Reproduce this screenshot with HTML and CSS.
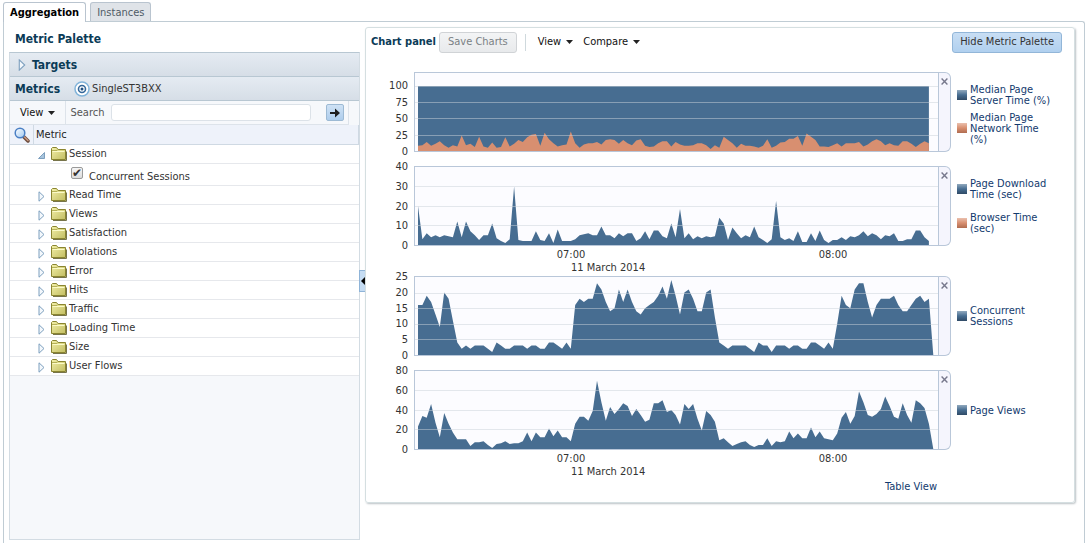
FILE: index.html
```html
<!DOCTYPE html>
<html lang="en">
<head>
  <meta charset="UTF-8">
  <meta name="viewport" content="width=device-width, initial-scale=1.0">
  <title>Metrics - Aggregation</title>
  <link rel="stylesheet" href="styles.css">
</head>
<body>
  <!-- shared icons -->
  <svg class="sprite" aria-hidden="true">
    <defs>
      <linearGradient id="folder-fill" x1="0" y1="0" x2="1" y2="1">
        <stop offset="0" stop-color="#f3f0a8"/>
        <stop offset="1" stop-color="#c2bd62"/>
      </linearGradient>
      <linearGradient id="lens-fill" x1="0" y1="0" x2="1" y2="1">
        <stop offset="0" stop-color="#ffffff"/>
        <stop offset="1" stop-color="#9fc8f0"/>
      </linearGradient>
    </defs>
    <symbol id="icon-folder" viewBox="0 0 16 14">
      <path d="M2 13.500h13.500V4.500" fill="none" stroke="#77744a"/>
      <path d="M.5 12.500V1.500L1.500 .5h4L7 2.500h7.500v10z" fill="url(#folder-fill)" stroke="#8a8530"/>
      <path d="M1 3.500h5L7 2.500" fill="none" stroke="#b5b056"/>
      <path d="M1.500 4.500h12" fill="none" stroke="#fbfac8"/>
    </symbol>
    <symbol id="icon-closed" viewBox="0 0 7 11">
      <path d="M1 .8L6 5.500L1 10.200z" fill="#f4f8fc" stroke="#7d9fbe"/>
    </symbol>
    <symbol id="icon-open" viewBox="0 0 7 7">
      <path d="M6.500 .5v6h-6z" fill="#a8c4dc" stroke="#7d9fbe"/>
    </symbol>
    <symbol id="icon-down" viewBox="0 0 7 4">
      <path d="M0 0h7L3.500 4z" fill="#222"/>
    </symbol>
    <symbol id="icon-close" viewBox="0 0 6 6">
      <path d="M.5 .5l5 5M5.500 .5l-5 5" stroke="#77788c" stroke-width="1.200"/>
    </symbol>
  </svg>

  <nav class="tabs">
    <a class="tab active" href="#aggregation">Aggregation</a>
    <a class="tab" href="#instances">Instances</a>
  </nav>

  <main class="page" id="aggregation">
    <aside class="palette">
      <h1 class="palette-title">Metric Palette</h1>

      <div class="palette-body">
        <button class="bar targets" type="button" aria-expanded="false">
          <svg width="8" height="12"><use href="#icon-closed"/></svg>
          Targets
        </button>
        <div class="bar metrics">
          <h2>Metrics</h2>
          <svg class="target-icon" viewBox="0 0 16 16" width="16" height="16">
            <circle cx="8" cy="8" r="7" fill="#fff" stroke="#82b4da" stroke-width="1.500"/>
            <circle cx="8" cy="8" r="3.500" fill="#fff" stroke="#35689a" stroke-width="1.600"/>
            <circle cx="8" cy="8" r="1.500" fill="#204f80"/>
          </svg>
          <span>SingleST3BXX</span>
        </div>

        <form class="search">
          <button class="menu" type="button">View <svg width="7" height="4"><use href="#icon-down"/></svg></button>
          <label for="search">Search</label>
          <input id="search" type="text">
          <button class="go" type="submit" aria-label="Go">
            <svg viewBox="0 0 10 10" width="10" height="10"><path d="M0 4h5V.5L10 5L5 9.500V6H0z" fill="#1d1d1d"/></svg>
          </button>
        </form>

        <table class="tree">
          <thead>
            <tr>
              <th class="find">
                <svg viewBox="0 0 16 16" width="16" height="16">
                  <path d="M9.500 9.500l4.500 4.500" stroke="#6b4a3c" stroke-width="3.500" stroke-linecap="round"/>
                  <path d="M10.500 10l3.500 3.500" stroke="#c89a82" stroke-width="1.500" stroke-linecap="round"/>
                  <circle cx="6" cy="6" r="4.800" fill="url(#lens-fill)" stroke="#4a7fc4" stroke-width="1.500"/>
                </svg>
              </th>
              <th>Metric</th>
            </tr>
          </thead>
          <tbody>
            <tr><td colspan="2"><div class="node"><svg class="twist" width="7" height="7"><use href="#icon-open"/></svg><svg width="16" height="14"><use href="#icon-folder"/></svg>Session</div></td></tr>
            <tr><td colspan="2"><div class="leaf"><input id="concurrent" type="checkbox" checked><label for="concurrent">Concurrent Sessions</label></div></td></tr>
            <tr><td colspan="2"><div class="node"><svg class="twist" width="7" height="11"><use href="#icon-closed"/></svg><svg width="16" height="14"><use href="#icon-folder"/></svg>Read Time</div></td></tr>
            <tr><td colspan="2"><div class="node"><svg class="twist" width="7" height="11"><use href="#icon-closed"/></svg><svg width="16" height="14"><use href="#icon-folder"/></svg>Views</div></td></tr>
            <tr><td colspan="2"><div class="node"><svg class="twist" width="7" height="11"><use href="#icon-closed"/></svg><svg width="16" height="14"><use href="#icon-folder"/></svg>Satisfaction</div></td></tr>
            <tr><td colspan="2"><div class="node"><svg class="twist" width="7" height="11"><use href="#icon-closed"/></svg><svg width="16" height="14"><use href="#icon-folder"/></svg>Violations</div></td></tr>
            <tr><td colspan="2"><div class="node"><svg class="twist" width="7" height="11"><use href="#icon-closed"/></svg><svg width="16" height="14"><use href="#icon-folder"/></svg>Error</div></td></tr>
            <tr><td colspan="2"><div class="node"><svg class="twist" width="7" height="11"><use href="#icon-closed"/></svg><svg width="16" height="14"><use href="#icon-folder"/></svg>Hits</div></td></tr>
            <tr><td colspan="2"><div class="node"><svg class="twist" width="7" height="11"><use href="#icon-closed"/></svg><svg width="16" height="14"><use href="#icon-folder"/></svg>Traffic</div></td></tr>
            <tr><td colspan="2"><div class="node"><svg class="twist" width="7" height="11"><use href="#icon-closed"/></svg><svg width="16" height="14"><use href="#icon-folder"/></svg>Loading Time</div></td></tr>
            <tr><td colspan="2"><div class="node"><svg class="twist" width="7" height="11"><use href="#icon-closed"/></svg><svg width="16" height="14"><use href="#icon-folder"/></svg>Size</div></td></tr>
            <tr><td colspan="2"><div class="node"><svg class="twist" width="7" height="11"><use href="#icon-closed"/></svg><svg width="16" height="14"><use href="#icon-folder"/></svg>User Flows</div></td></tr>
          </tbody>
        </table>
      </div>
    </aside>

    <div class="splitter">
      <button type="button" aria-label="Collapse palette">
        <svg viewBox="0 0 4 8" width="4" height="8"><path d="M4 0v8L0 4z" fill="#000"/></svg>
      </button>
    </div>

    <section class="charts">
      <div class="toolbar">
        <h2>Chart panel</h2>
        <button class="button" type="button" disabled>Save Charts</button>
        <span class="divider"></span>
        <button class="menu" type="button">View <svg width="7" height="4"><use href="#icon-down"/></svg></button>
        <button class="menu" type="button">Compare <svg width="7" height="4"><use href="#icon-down"/></svg></button>
        <button class="button primary" type="button">Hide Metric Palette</button>
      </div>

      <div class="chart">
        <div class="y-axis short"><span>100</span><span>75</span><span>50</span><span>25</span><span>0</span></div>
        <div class="plot"><svg data-chart="pageTime" viewBox="0 0 523 78" preserveAspectRatio="none"></svg></div>
        <button class="close" type="button" aria-label="Close"><svg width="7" height="7"><use href="#icon-close"/></svg></button>
        <ul class="legend">
          <li><i class="swatch blue"></i><span>Median Page Server Time (%)</span></li>
          <li><i class="swatch orange"></i><span>Median Page Network Time (%)</span></li>
        </ul>
      </div>

      <div class="chart">
        <div class="y-axis"><span>40</span><span>30</span><span>20</span><span>10</span><span>0</span></div>
        <div class="plot"><svg data-chart="download" viewBox="0 0 523 78" preserveAspectRatio="none"></svg></div>
        <button class="close" type="button" aria-label="Close"><svg width="7" height="7"><use href="#icon-close"/></svg></button>
        <ul class="legend spread">
          <li><i class="swatch blue"></i><span>Page Download Time (sec)</span></li>
          <li><i class="swatch orange"></i><span>Browser Time (sec)</span></li>
        </ul>
        <div class="x-axis"><span class="first">07:00</span><span class="second">08:00</span><span class="date">11 March 2014</span></div>
      </div>

      <div class="chart">
        <div class="y-axis"><span>25</span><span>20</span><span>15</span><span>10</span><span>5</span><span>0</span></div>
        <div class="plot"><svg data-chart="sessions" viewBox="0 0 523 78" preserveAspectRatio="none"></svg></div>
        <button class="close" type="button" aria-label="Close"><svg width="7" height="7"><use href="#icon-close"/></svg></button>
        <ul class="legend single">
          <li><i class="swatch blue"></i><span>Concurrent Sessions</span></li>
        </ul>
      </div>

      <div class="chart">
        <div class="y-axis"><span>80</span><span>60</span><span>40</span><span>20</span><span>0</span></div>
        <div class="plot"><svg data-chart="pageViews" viewBox="0 0 523 78" preserveAspectRatio="none"></svg></div>
        <button class="close" type="button" aria-label="Close"><svg width="7" height="7"><use href="#icon-close"/></svg></button>
        <ul class="legend single">
          <li><i class="swatch blue"></i><span>Page Views</span></li>
        </ul>
        <div class="x-axis"><span class="first">07:00</span><span class="second">08:00</span><span class="date">11 March 2014</span></div>
      </div>

      <div class="footer"><a href="#table">Table View</a></div>
    </section>
  </main>

  <script src="charts.js"></script>
</body>
</html>
```
FILE: styles.css
```css
body {
  font-family: "DejaVu Sans Condensed", Tahoma, "DejaVu Sans", sans-serif;
  font-size: 11px;
  line-height: 14px;
  color: #333;
  background: #fff;
  margin: 0;
  padding: 2px 4px 0 3px;
  min-height: 100vh;
  box-sizing: border-box;
  display: flex;
  flex-direction: column;
}

button,
input {
  font: inherit;
  color: inherit;
  margin: 0;
}

button {
  cursor: pointer;
}

h1,
h2 {
  font-size: 12px;
  line-height: 16px;
  color: #0b3b57;
  margin: 0;
}

svg {
  display: block;
  flex-shrink: 0;
}

.sprite {
  position: absolute;
  width: 0;
  height: 0;
}

/* Tabs */
.tabs {
  display: flex;
  gap: 4px;
  height: 19px;
}

.tab {
  height: 19px;
  line-height: 19px;
  padding: 0 6px;
  border: 1px solid #b9c4cf;
  border-bottom: none;
  border-radius: 3px 3px 0 0;
  background: #dfe3e8;
  color: #4f5b66;
  text-decoration: none;
  box-sizing: border-box;
}

.tab.active {
  height: 20px;
  position: relative;
  background: #fff;
  color: #000;
  font-weight: bold;
}

.page {
  flex: 1;
  display: flex;
  border: 1px solid #c0ccd4;
  border-bottom: none;
  border-radius: 0 3px 0 0;
  padding: 0 9px 3px 5px;
}

/* Metric palette */
.palette {
  width: 351px;
  flex-shrink: 0;
  display: flex;
  flex-direction: column;
}

.palette-title {
  padding: 9px 6px 5px;
}

.palette-body {
  flex: 1;
  display: flex;
  flex-direction: column;
  border: 1px solid #b8c7d2;
  border-color: #b8c7d2 #d3dce3 #d3dce3;
  background: #f6f8fb;
}

.bar {
  display: flex;
  align-items: center;
  height: 24px;
  box-sizing: border-box;
  padding: 0 5px;
  border: none;
  border-bottom: 1px solid #b8c7d2;
  background: linear-gradient(#e5ebf2, #d6dee7);
}

.targets {
  gap: 6px;
  padding-left: 8px;
  font-size: 12px;
  font-weight: bold;
  color: #0b3b57;
}

.metrics h2 {
  margin-right: 14px;
}

.metrics span {
  margin-left: 2px;
}

.search {
  display: flex;
  align-items: center;
  height: 23px;
  margin-right: 10px;
  border-right: 1px solid #dde3ea;
  border-bottom: 1px solid #dde3ea;
}

.menu {
  display: inline-flex;
  align-items: center;
  gap: 5px;
  padding: 0;
  border: none;
  background: none;
  color: #111;
}

.search .menu {
  padding: 0 10px;
  height: 23px;
  border-right: 1px solid #dde3ea;
}

.search label {
  margin: 0 7px 0 4px;
  color: #555;
}

.search input {
  flex: 1;
  min-width: 0;
  height: 17px;
  box-sizing: border-box;
  border: 1px solid #dce2e8;
  border-radius: 3px;
  background: #fff;
  padding: 0 3px;
}

.go {
  display: flex;
  align-items: center;
  justify-content: center;
  width: 18px;
  height: 17px;
  margin: 0 4px 0 15px;
  padding: 0;
  border: 1px solid #9dbad4;
  border-radius: 2px;
  background: linear-gradient(#cfe2f5, #aecdec);
}

.tree {
  width: 100%;
  border-collapse: collapse;
  background: #fff;
}

.tree th {
  height: 19px;
  padding: 0 2px;
  background: #eef2fa;
  border-bottom: 1px solid #cfd9e3;
  border-right: 1px solid #cfd9e3;
  color: #222;
  font-weight: normal;
  text-align: left;
}

.tree .find {
  width: 19px;
  padding: 0 0 0 4px;
}

.tree td {
  padding: 0;
  border-bottom: 1px solid #e6e8ec;
}

.node {
  display: flex;
  align-items: center;
  height: 18px;
  padding-left: 28px;
  gap: 2px;
}

.twist {
  width: 7px;
  margin: 3px 4px 0 0;
}

.leaf {
  display: flex;
  align-items: center;
  height: 21px;
  padding-left: 61px;
}

.leaf input {
  appearance: none;
  width: 12px;
  height: 12px;
  box-sizing: border-box;
  margin: 0 6px 4px 0;
  border: 1px solid #9a9a9a;
  border-radius: 2px;
  background: linear-gradient(#f6f6f6, #dcdcdc);
}

.leaf input:checked::before {
  content: "✔";
  display: block;
  font-family: "DejaVu Sans", sans-serif;
  font-size: 12px;
  line-height: 10px;
  color: #333;
}

.leaf label {
  margin-top: 4px;
}

/* Splitter */
.splitter {
  width: 5px;
  display: flex;
  align-items: center;
  flex-shrink: 0;
}

.splitter button {
  width: 7px;
  height: 22px;
  margin-left: -1px;
  padding: 0;
  display: flex;
  align-items: center;
  justify-content: center;
  flex-shrink: 0;
  border: 1px solid #8fb4d8;
  border-right: none;
  background: #c5dcf3;
}

/* Chart panel */
.charts {
  flex: 1;
  min-width: 0;
  align-self: flex-start;
  margin-top: 5px;
  border: 1px solid #d5dfe1;
  border-radius: 3px;
  box-shadow: 1px 1px 2px #bcc2c6;
  padding-left: 5px;
}

.toolbar {
  display: flex;
  align-items: center;
  height: 20px;
  padding: 4px 12px 20px 0;
}

.toolbar h2 {
  font-size: 11px;
}

.button {
  height: 21px;
  padding: 0 7px;
  border: 1px solid #d0d3d6;
  border-radius: 3px;
  background: linear-gradient(#f3f4f5, #e8eaec);
  color: #333;
}

.button:disabled {
  margin-left: 3px;
  padding: 0 8px;
  color: #7a8084;
  cursor: default;
}

.button.primary {
  margin-left: auto;
  border-color: #92b6d8;
  background: linear-gradient(#c8def4, #b0d0ef);
}

.divider {
  width: 1px;
  height: 17px;
  margin: 0 12px 0 8px;
  background: #cfd9dd;
}

.toolbar .menu {
  margin-right: 10px;
}

.chart {
  display: grid;
  grid-template-columns: 43px minmax(0, 1fr) 12px 123px;
  grid-template-rows: 80px auto;
  margin-bottom: 14px;
}

.y-axis {
  display: flex;
  flex-direction: column;
  justify-content: space-between;
  margin: -6px 6px -6px 0;
  line-height: 13px;
  text-align: right;
}

.y-axis.short {
  margin-top: 7px;
}

.plot {
  border: 1px solid #b9c7d9;
  background: #fcfcff;
}

.plot svg {
  width: 100%;
  height: 78px;
}

.area-blue {
  fill: #476d91;
}

.area-orange {
  fill: #d88f70;
}

.grid-line {
  fill: #c9d2da;
  fill-opacity: 0.5;
}

.close {
  display: flex;
  justify-content: center;
  padding: 5px 0 0;
  border: 1px solid #b9c7d9;
  border-left: none;
  border-radius: 0 6px 6px 0;
  background: #f5f5fd;
}

.legend {
  list-style: none;
  margin: 0;
  padding: 4px 12px 0 6px;
  display: flex;
  flex-direction: column;
  justify-content: center;
  gap: 6px;
  line-height: 11px;
  color: #123a6e;
}

.legend.spread {
  padding-top: 0;
  gap: 12px;
}

.legend.single {
  padding-top: 0;
}

.legend li {
  display: flex;
  align-items: center;
  gap: 3px;
}

.legend span {
  max-width: 82px;
}

.swatch {
  width: 10px;
  height: 10px;
  flex-shrink: 0;
}

.swatch.blue {
  background: linear-gradient(#91a9be, #476d91 50%, #2f4a66);
}

.swatch.orange {
  background: linear-gradient(#eac0ae, #d88f70 50%, #b06c50);
}

/* hour marks line up with the samples in the plot above */
.x-axis {
  grid-column: 2 / 4;
  display: grid;
  grid-template-columns: 57fr 200fr 62fr 200fr 18fr;
  line-height: 13px;
  padding-top: 2px;
  margin-bottom: -12px;
}

.x-axis .first,
.x-axis .date {
  grid-column: 2;
}

.x-axis .second {
  grid-column: 4;
}

.x-axis .first,
.x-axis .second {
  grid-row: 1;
  text-align: center;
}

.x-axis .date {
  padding-left: 50%;
  white-space: nowrap;
}

.footer {
  padding: 0 137px 8px 0;
  text-align: right;
}

.footer a {
  color: #123a6e;
  text-decoration: none;
}
```
FILE: charts.js
```js
// One sample per minute, starting at 06:25
const charts = {
  pageTime: {
    pxPerUnit: 0.65,
    ticks: [25, 50, 75, 100],
    total: 100,
    color: 'orange',
    values: [8, 9, 14, 8, 11, 15, 9, 5, 9, 7, 24, 9, 11, 6, 22, 7, 5, 13, 5, 6,
      21, 7, 11, 17, 14, 21, 25, 26, 8, 28, 18, 12, 7, 9, 10, 30, 12, 5, 10, 12,
      12, 14, 10, 17, 18, 17, 11, 17, 12, 9, 16, 18, 8, 6, 7, 12, 15, 15, 7, 14,
      10, 8, 8, 9, 12, 12, 9, 3, 9, 5, 22, 17, 12, 5, 11, 8, 8, 7, 5, 8,
      18, 5, 8, 13, 14, 19, 19, 23, 8, 27, 22, 17, 7, 7, 6, 9, 12, 7, 12, 12,
      12, 14, 7, 10, 15, 18, 15, 9, 12, 9, 8, 15, 15, 11, 6, 11, 15, 12]
  },
  download: {
    pxPerUnit: 1.95,
    ticks: [10, 20, 30],
    color: 'blue',
    values: [20, 3, 6, 4, 5, 4, 5, 4.5, 4, 12, 4, 12, 7, 5, 2.5, 5, 5, 11, 3.5, 2,
      1, 3, 30, 2.5, 2, 2, 2, 7, 2.5, 2, 6, 1, 8, 2, 2, 2, 3, 5, 5.5, 6,
      5, 5, 9.5, 5, 5, 3.5, 6, 4.5, 6, 6, 2, 3.5, 7, 3, 7.5, 7.5, 4.5, 3.5, 11, 4,
      18.5, 3.5, 6, 3, 4.5, 3.5, 4.5, 4, 4.5, 14, 11, 2.5, 9, 6, 3.5, 5, 4, 9.5, 4, 2.5,
      1, 3, 22.5, 4, 2.5, 3.5, 2, 7, 1.5, 1.5, 6, 2, 7.5, 2.5, 1, 2.5, 2.5, 4, 2.5, 4.5,
      4, 5, 7, 4.5, 6, 5, 3, 5, 4.5, 6, 2, 2, 3, 3, 7.5, 7.5, 4, 2]
  },
  sessions: {
    pxPerUnit: 3.12,
    ticks: [5, 10, 15, 20],
    color: 'blue',
    values: [16, 16, 19, 17, 13, 9, 20, 18, 11, 4, 2, 3, 2, 3, 3, 3, 2, 1, 4, 3,
      2, 2, 3, 3, 3, 2, 3, 3, 2, 2, 4, 4, 3, 2, 4, 2, 16, 18, 17, 18,
      18, 23, 21, 17, 14, 15, 21, 17, 21, 17, 14, 13, 15, 16, 17, 19, 22, 18, 24, 19,
      13, 20, 21, 18, 14, 14, 20, 21, 12, 4, 3, 2, 3, 3, 3, 3, 2, 1, 4, 3,
      3, 1, 3, 3, 3, 2, 3, 3, 2, 2, 4, 4, 3, 2, 4, 2, 10, 19, 16, 15,
      21, 23, 23, 17, 12, 16, 18, 18, 18, 19, 16, 14, 14, 16, 18, 19, 17, 18, 0]
  },
  pageViews: {
    pxPerUnit: 0.975,
    ticks: [20, 40, 60],
    color: 'blue',
    values: [23, 34, 32, 46, 27, 12, 37, 26, 17, 10, 10, 10, 3, 7, 7, 8, 4, 1, 5, 6,
      8, 5, 6, 6, 8, 17, 8, 17, 12, 12, 21, 13, 19, 12, 12, 8, 26, 33, 33, 29,
      39, 70, 48, 29, 43, 36, 41, 47, 44, 34, 41, 35, 28, 30, 47, 47, 50, 38, 40, 35,
      25, 46, 41, 46, 31, 19, 39, 35, 28, 9, 11, 7, 3, 5, 7, 8, 4, 2, 4, 4,
      11, 3, 8, 7, 8, 18, 11, 16, 11, 11, 22, 12, 18, 11, 10, 9, 16, 32, 38, 26,
      34, 59, 48, 35, 33, 36, 41, 54, 44, 33, 31, 47, 35, 27, 50, 47, 42, 26, 0]
  }
};

const WIDTH = 523;
const HEIGHT = 78;
const START = 3;
const STEP = 262 / 60;

function add(svg, name, attrs) {
  const el = document.createElementNS('http://www.w3.org/2000/svg', name);
  for (const key in attrs) el.setAttribute(key, attrs[key]);
  svg.appendChild(el);
}

function area(values, pxPerUnit) {
  const x = i => (START + i * STEP).toFixed(1);
  const top = values.map((v, i) => x(i) + ',' + (HEIGHT - v * pxPerUnit).toFixed(1));
  return [x(0) + ',' + HEIGHT, ...top, x(values.length - 1) + ',' + HEIGHT].join(' ');
}

document.querySelectorAll('[data-chart]').forEach(svg => {
  const chart = charts[svg.dataset.chart];
  if (chart.total) {
    const full = chart.values.map(() => chart.total);
    add(svg, 'polygon', { points: area(full, chart.pxPerUnit), class: 'area-blue' });
  }
  add(svg, 'polygon', { points: area(chart.values, chart.pxPerUnit), class: 'area-' + chart.color });
  chart.ticks.forEach(tick => {
    const y = HEIGHT - Math.round(tick * chart.pxPerUnit);
    add(svg, 'rect', { x: 0, y: y, width: WIDTH, height: 1, class: 'grid-line' });
  });
});
```
